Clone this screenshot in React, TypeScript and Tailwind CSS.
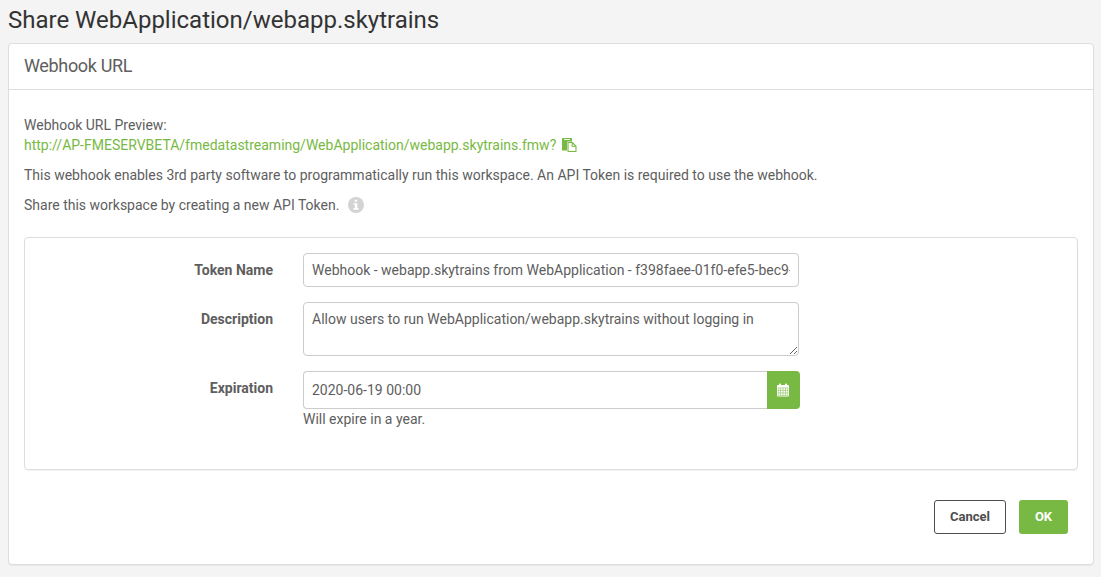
import type { ReactNode } from 'react';

function PasteIcon() {
  return (
    <svg className="ml-[6px] h-[14px] w-[15px] shrink-0" viewBox="0 0 15 14" fill="none">
      <path d="M.6 0H9.400a.6.6 0 0 1 .6.6V3.500H6a1 1 0 0 0-1 1V12.500H.6a.6.6 0 0 1-.6-.6V.6A.6.6 0 0 1 .6 0Z" fill="#78b943" />
      <path d="M2 1.500H8" stroke="#fff" strokeWidth=".9" />
      <path d="M6 4.500H10.200L14 8.200V13.500H6Z" fill="#fff" stroke="#78b943" strokeWidth="1.1" strokeLinejoin="round" />
      <path d="M10.200 4.500V8.200H14" stroke="#78b943" strokeWidth="1.1" />
    </svg>
  );
}

function InfoIcon() {
  return (
    <svg className="ml-[9px] h-4 w-4 shrink-0" viewBox="0 0 16 16">
      <circle cx="8" cy="8" r="8" fill="#d3d3d3" />
      <path d="M6.700 2.800h2.500v2H6.700zM5.600 6.200h3.700v4.900h1.300v1.600H5.500v-1.600h1.300V7.800H5.600z" fill="#fff" />
    </svg>
  );
}

function CalendarIcon() {
  return (
    <svg className="mr-px h-[14px] w-[12px]" viewBox="0 0 12 14" fill="none">
      <path d="M1 2h10a1 1 0 0 1 1 1v9.500a1 1 0 0 1-1 1H1a1 1 0 0 1-1-1V3a1 1 0 0 1 1-1Z" fill="#fff" />
      <rect x="2" y=".4" width="2" height="3" rx=".8" fill="#fff" />
      <rect x="8" y=".4" width="2" height="3" rx=".8" fill="#fff" />
      <path d="M1 4.900h10M1 7.400h10M1 9.900h10M1 12.400h10M1.200 4.900v7.500M3.600 4.900v7.500M6 4.900v7.500M8.400 4.900v7.500M10.800 4.900v7.500" stroke="#78b943" strokeWidth=".5" />
    </svg>
  );
}

function Row({ label, children, className }: { label: string; children: ReactNode; className: string }) {
  return (
    <div className={`flex ${className}`}>
      <label className="mr-[30px] w-[248px] shrink-0 pt-[7px] text-right font-bold">{label}</label>
      {children}
    </div>
  );
}

const field = 'rounded-[4px] border border-[#ccc] bg-white px-2 outline-none';

export default function App() {
  return (
    <main className="h-[577px] w-[1101px] overflow-hidden bg-[#f4f4f4] px-2 pt-[5px] font-[Roboto,sans-serif] text-[14px] leading-5 text-[#5e5e5e]">
      <h1 className="h-[38px] text-[24px] leading-[30px] text-[#333]">Share WebApplication/webapp.skytrains</h1>
      <section className="h-[522px] w-[1086px] rounded-[4px] border border-[#ddd] bg-white shadow-[0_1px_1px_rgba(0,0,0,0.05)]">
        <header className="h-[46px] border-b border-[#ddd] px-[15px] pt-[11px]">
          <h2 className="text-[18px] leading-[22px] tracking-[-0.34px]">Webhook URL</h2>
        </header>
        <div className="px-[15px] pt-[25px]">
          <p>Webhook URL Preview:</p>
          <p className="flex items-center text-[#78b943]">
            <a>http://AP-FMESERVBETA/fmedatastreaming/WebApplication/webapp.skytrains.fmw?</a>
            <PasteIcon />
          </p>
          <p className="mt-[10px]">
            This webhook enables 3rd party software to programmatically run this workspace. An API Token is required to use the webhook.
          </p>
          <p className="mt-[10px] flex items-center">
            Share this workspace by creating a new API Token.
            <InfoIcon />
          </p>
          <div className="mt-[22px] h-[233px] rounded-[4px] border border-[#ddd] pt-[15px] shadow-[0_1px_1px_rgba(0,0,0,0.05)]">
            <Row label="Token Name" className="mb-[15px]">
              <input
                className={`${field} h-[34px] w-[496px]`}
                defaultValue="Webhook - webapp.skytrains from WebApplication - f398faee-01f0-efe5-bec9-"
              />
            </Row>
            <Row label="Description" className="mb-[15px]">
              <textarea
                className={`${field} h-[54px] w-[496px] resize py-[6px]`}
                defaultValue="Allow users to run WebApplication/webapp.skytrains without logging in"
              />
            </Row>
            <Row label="Expiration" className="">
              <div>
                <div className="flex">
                  <input className="h-[38px] w-[464px] rounded-l-[4px] border border-r-0 border-[#ccc] bg-white px-2 outline-none" defaultValue="2020-06-19 00:00" />
                  <button className="flex h-[38px] w-[33px] items-center justify-center rounded-r-[4px] bg-[#78b943]" aria-label="Calendar">
                    <CalendarIcon />
                  </button>
                </div>
                <p>Will expire in a year.</p>
              </div>
            </Row>
          </div>
          <div className="mt-[30px] flex justify-end gap-[13px] pr-[10px] text-[13px] font-bold">
            <button className="h-[34px] w-[72px] rounded-[3px] border border-[#4d4d4d] bg-white text-[#4d4d4d]">Cancel</button>
            <button className="h-[34px] w-[49px] rounded-[3px] bg-[#78b943] text-white">OK</button>
          </div>
        </div>
      </section>
    </main>
  );
}
